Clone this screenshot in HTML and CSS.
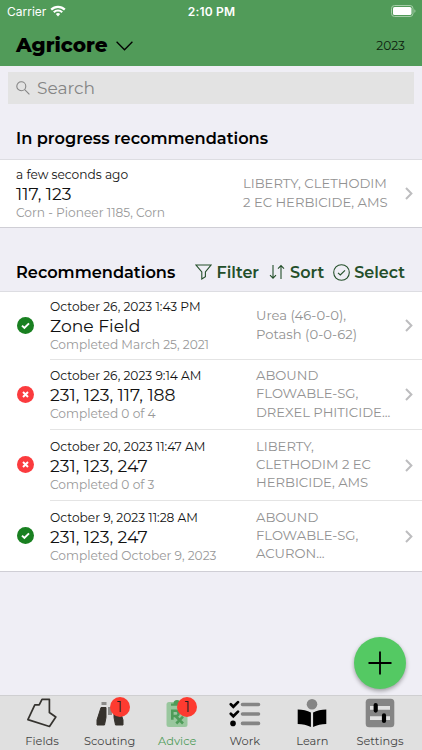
FILE: index.html
```html
<!DOCTYPE html>
<html lang="en">
<head>
    <meta charset="UTF-8">
    <meta name="viewport" content="width=device-width, initial-scale=1.0">
    <title>Agricore</title>
    <link rel="stylesheet" href="styles.css">
</head>
<body>
    <div class="app">
        <header class="header">
            <div class="status-bar">
                <div class="carrier">
                    <span>Carrier</span>
                    <svg width="16" height="12" viewBox="0 0 16 12" fill="none" stroke="#fff" stroke-width="2.2">
                        <path d="M1.2 4.6a9.6 9.6 0 0 1 13.6 0M3.8 7.2a6 6 0 0 1 8.4 0"/>
                        <path d="M8 11.4L5.8 9.1a3.1 3.1 0 0 1 4.4 0z" fill="#fff" stroke="none"/>
                    </svg>
                </div>
                <span class="time">2:10 PM</span>
                <svg class="battery" width="25" height="12" viewBox="0 0 25 12">
                    <rect x=".5" y=".5" width="21.5" height="11" rx="3" fill="none" stroke="#a5cda8"/>
                    <rect x="2" y="2" width="18.5" height="8" rx="1.6" fill="#fff"/>
                    <path d="M23.4 4.2c1.4.5 1.4 3.1 0 3.6z" fill="#a5cda8"/>
                </svg>
            </div>
            <div class="title-bar">
                <h1>Agricore</h1>
                <svg class="chevron-down" width="17" height="10" viewBox="0 0 17 10" fill="none" stroke="#000" stroke-width="1.3"><path d="M.6.8l7.9 8 7.9-8"/></svg>
                <span class="year">2023</span>
            </div>
        </header>

        <main class="content">
            <div class="search">
                <svg width="14" height="14" viewBox="0 0 14 14" fill="none" stroke="#858585" stroke-width="1.1"><circle cx="5.3" cy="5.3" r="4.5"/><path d="M8.7 8.7l4.7 4.6"/></svg>
                <span>Search</span>
            </div>

            <h2 class="section-title">In progress recommendations</h2>
            <div class="list">
                <div class="row row-progress">
                    <div class="info">
                        <div class="date">a few seconds ago</div>
                        <div class="fields">117, 123</div>
                        <div class="note">Corn - Pioneer 1185, Corn</div>
                    </div>
                    <div class="products">LIBERTY, CLETHODIM<br>2 EC HERBICIDE, AMS</div>
                    <svg class="arrow" width="8" height="13" viewBox="0 0 8 13"><path d="M1 1l5.4 5.5L1 12"/></svg>
                </div>
            </div>

            <div class="section-bar">
                <h2>Recommendations</h2>
                <div class="action filter">
                    <svg width="17" height="16" viewBox="0 0 17 16"><path d="M1 1h15l-5.6 7v4.6L6.8 15V8z"/></svg>
                    <span>Filter</span>
                </div>
                <div class="action sort">
                    <svg width="16" height="16" viewBox="0 0 16 16"><path d="M4 1v13M1 11.2l3 3 3-3M12 15V1.6M9 4.6l3-3 3 3"/></svg>
                    <span>Sort</span>
                </div>
                <div class="action select">
                    <svg width="17" height="17" viewBox="0 0 17 17"><circle cx="8.5" cy="8.5" r="7.8"/><path d="M5 8.8l2.3 2.2L12 6.3"/></svg>
                    <span>Select</span>
                </div>
            </div>
            <div class="list">
                <div class="row row-first">
                    <svg class="state" width="17" height="17" viewBox="0 0 17 17"><circle cx="8.5" cy="8.5" r="8.5" fill="#198021"/><path d="M5 8.6l2.4 2.3L12 6.4"/></svg>
                    <div class="details">
                        <div class="info">
                            <div class="date">October 26, 2023 1:43 PM</div>
                            <div class="fields">Zone Field</div>
                            <div class="note">Completed March 25, 2021</div>
                        </div>
                        <div class="products">Urea (46-0-0),<br>Potash (0-0-62)</div>
                        <svg class="arrow" width="8" height="13" viewBox="0 0 8 13"><path d="M1 1l5.4 5.5L1 12"/></svg>
                    </div>
                </div>
                <div class="row row-short">
                    <svg class="state" width="17" height="17" viewBox="0 0 17 17"><circle cx="8.5" cy="8.5" r="8.5" fill="#fb3b3e"/><path d="M6 6l5 5M11 6l-5 5"/></svg>
                    <div class="details">
                        <div class="info">
                            <div class="date">October 26, 2023 9:14 AM</div>
                            <div class="fields">231, 123, 117, 188</div>
                            <div class="note">Completed 0 of 4</div>
                        </div>
                        <div class="products">ABOUND<br>FLOWABLE-SG,<br>DREXEL PHITICIDE...</div>
                        <svg class="arrow" width="8" height="13" viewBox="0 0 8 13"><path d="M1 1l5.4 5.5L1 12"/></svg>
                    </div>
                </div>
                <div class="row">
                    <svg class="state" width="17" height="17" viewBox="0 0 17 17"><circle cx="8.5" cy="8.5" r="8.5" fill="#fb3b3e"/><path d="M6 6l5 5M11 6l-5 5"/></svg>
                    <div class="details">
                        <div class="info">
                            <div class="date">October 20, 2023 11:47 AM</div>
                            <div class="fields">231, 123, 247</div>
                            <div class="note">Completed 0 of 3</div>
                        </div>
                        <div class="products">LIBERTY,<br>CLETHODIM 2 EC<br>HERBICIDE, AMS</div>
                        <svg class="arrow" width="8" height="13" viewBox="0 0 8 13"><path d="M1 1l5.4 5.5L1 12"/></svg>
                    </div>
                </div>
                <div class="row">
                    <svg class="state" width="17" height="17" viewBox="0 0 17 17"><circle cx="8.5" cy="8.5" r="8.5" fill="#198021"/><path d="M5 8.6l2.4 2.3L12 6.4"/></svg>
                    <div class="details">
                        <div class="info">
                            <div class="date">October 9, 2023 11:28 AM</div>
                            <div class="fields">231, 123, 247</div>
                            <div class="note">Completed October 9, 2023</div>
                        </div>
                        <div class="products">ABOUND<br>FLOWABLE-SG,<br>ACURON...</div>
                        <svg class="arrow" width="8" height="13" viewBox="0 0 8 13"><path d="M1 1l5.4 5.5L1 12"/></svg>
                    </div>
                </div>
            </div>
        </main>

        <button class="add-button" aria-label="Add">
            <svg width="24" height="24" viewBox="0 0 24 24" stroke="#000" stroke-width="1.8"><path d="M12 .5v23M.5 12h23"/></svg>
        </button>

        <nav class="tabs">
            <div class="tab">
                <svg width="30" height="30" viewBox="0 0 30 30" fill="none" stroke="#35332f" stroke-width="1.7" stroke-linejoin="round"><path d="M15 1.3h7.4v13.2l6.4 4.5-6.3 9.5L.9 21.6 7.8 6.8h4.4z"/></svg>
                <span>Fields</span>
            </div>
            <div class="tab">
                <div class="icon">
                    <svg width="30" height="30" viewBox="0 0 30 30">
                        <path d="M6.500 4h5v3h-5zM18.500 4h5v3h-5zM13 9h4v8h-4z" fill="#8c8b89"/>
                        <path d="M6 9.500h5v10L9.500 27H2v-5zM19 9.500h5L28 22v5h-7.500L19 19.500z" fill="#36322d" stroke="#36322d" stroke-linejoin="round"/>
                    </svg>
                    <span class="badge">1</span>
                </div>
                <span>Scouting</span>
            </div>
            <div class="tab active">
                <div class="icon">
                    <svg width="30" height="30" viewBox="0 0 30 30">
                        <rect x="4.500" y="4" width="21" height="25" rx="2.500" fill="#99c79e"/>
                        <path d="M9 7.700V5.500h2.500a3.500 3.500 0 0 1 7 0H21v2.200z" fill="#4f9c59"/>
                        <path d="M10.300 21.800v-9H14a2.600 2.600 0 0 1 0 5.200h-3.700M13.500 18l7.500 7.500M21 18.700l-6.700 6.800" fill="none" stroke="#4f9c59" stroke-width="2.600"/>
                    </svg>
                    <span class="badge">1</span>
                </div>
                <span>Advice</span>
            </div>
            <div class="tab">
                <svg width="32" height="30" viewBox="0 0 32 30" fill="none">
                    <path d="M13.500 6.500h16M13.500 16h16M13.500 25.400h16" stroke="#858585" stroke-width="3.600" stroke-linecap="round"/>
                    <path d="M1.800 6.300l2.500 2.500 4.700-4.700M1.800 15.800l2.500 2.500 4.700-4.700" stroke="#000" stroke-width="2.700" stroke-linecap="round"/>
                    <circle cx="4" cy="25.400" r="2.800" fill="#000"/>
                </svg>
                <span>Work</span>
            </div>
            <div class="tab">
                <svg width="30" height="30" viewBox="0 0 30 30">
                    <circle cx="15" cy="6.200" r="5.300" fill="#858585"/>
                    <path d="M.7 11.500c5 0 9.500 1 13.200 3V29C10 27 5.500 26.200.7 26zM29.300 11.500c-5 0-9.500 1-13.200 3V29c3.900-2 8.400-2.800 13.200-3z"/>
                </svg>
                <span>Learn</span>
            </div>
            <div class="tab">
                <svg width="30" height="30" viewBox="0 0 30 30">
                    <rect x=".7" y=".7" width="28.600" height="28.600" rx="3.500" fill="#858585"/>
                    <path d="M5 9.800h20M5 20.200h20" stroke="#e0e0e0" stroke-width="3.800"/>
                    <path d="M10.700 7v5.600M19 17.400V23" stroke="#000" stroke-width="4.200" stroke-linecap="round"/>
                </svg>
                <span>Settings</span>
            </div>
        </nav>
    </div>
</body>
</html>
```
FILE: styles.css
```css
body {
    margin: 0;
    font-family: Montserrat, Inter, sans-serif;
    background-color: #efeef5;
    color: #111;
}

h1, h2 {
    margin: 0;
}

svg {
    display: block;
    flex: none;
}

.app {
    position: relative;
    display: flex;
    flex-direction: column;
    height: 750px;
    overflow: hidden;
    white-space: nowrap;
}

.header {
    height: 66px;
    background-color: #519b59;
}

.status-bar {
    display: grid;
    grid-template-columns: 1fr auto 1fr;
    align-items: center;
    height: 22px;
    padding: 0 6px 0 7px;
    color: #fff;
    font-family: Inter, sans-serif;
    font-size: 12px;
}

.carrier {
    display: flex;
    align-items: center;
    gap: 4px;
}

.time {
    font-weight: 600;
    letter-spacing: 0.2px;
}

.battery {
    justify-self: end;
}

.title-bar {
    display: flex;
    align-items: center;
    height: 46px;
    padding: 0 17px 0 16px;
}

.title-bar h1 {
    font-size: 20px;
    font-weight: 800;
    color: #000;
}

.chevron-down {
    margin: 2px 0 0 8px;
}

.year {
    margin-left: auto;
    font-size: 12.2px;
    color: #0c200e;
}

.content {
    flex: 1;
}

.search {
    display: flex;
    align-items: center;
    gap: 7px;
    height: 32px;
    margin: 6px 8px 0;
    padding-left: 8px;
    background-color: #e3e3e3;
    color: #858585;
    font-size: 17px;
}

.section-title,
.section-bar h2 {
    font-size: 16.2px;
    font-weight: 600;
    color: #000;
}

.section-title {
    margin-top: 23px;
    padding-left: 16px;
    height: 32px;
    line-height: 23px;
}

.list {
    background-color: #fff;
    border-top: 1px solid #dddde2;
    border-bottom: 1px solid #cfced5;
}

.row {
    display: flex;
    align-items: center;
    height: 71px;
    padding-left: 17px;
}

.row-progress {
    height: 67px;
    padding: 0 9px 0 16px;
}

.row-first {
    height: 67px;
}

.row-short {
    height: 70px;
}

.details {
    flex: 1;
    display: flex;
    align-items: center;
    height: 100%;
    box-sizing: border-box;
    margin-left: 16px;
    padding-right: 9px;
}

.row + .row .details {
    border-top: 1px solid #e4e4e4;
}

.info {
    flex: 1;
}

.date {
    font-size: 12.2px;
    line-height: 18px;
}

.fields {
    font-size: 17.2px;
    line-height: 20px;
}

.note {
    font-size: 12.2px;
    line-height: 17px;
    color: #999;
}

.products {
    width: 149px;
    padding-bottom: 2px;
    font-size: 13.15px;
    line-height: 18.3px;
    color: #929292;
}

.row-progress .products {
    width: 162px;
}

.arrow {
    fill: none;
    stroke: #bdbdbf;
    stroke-width: 2;
}

.state path {
    fill: none;
    stroke: #fff;
    stroke-width: 2;
}

.section-bar {
    display: flex;
    align-items: center;
    height: 38px;
    padding: 25px 17px 0 16px;
}

.action {
    display: flex;
    align-items: center;
    gap: 4px;
    color: #244f2a;
    font-size: 16px;
    font-weight: 600;
}

.action svg {
    fill: none;
    stroke: #244f2a;
    stroke-width: 1.1;
}

.filter {
    margin-left: auto;
}

.sort {
    gap: 5px;
    margin-left: 10px;
}

.select {
    margin-left: 9px;
}

.add-button {
    position: absolute;
    right: 16px;
    bottom: 61px;
    display: flex;
    align-items: center;
    justify-content: center;
    width: 52px;
    height: 52px;
    padding: 0;
    border: none;
    border-radius: 50%;
    background-color: #54c963;
    box-shadow: 0 2px 4px rgba(0, 0, 0, 0.35);
}

.tabs {
    display: grid;
    grid-template-columns: repeat(6, 67.6px);
    justify-content: center;
    height: 55px;
    box-sizing: border-box;
    border-top: 1px solid #cfcfd1;
    background-color: #e0e0e0;
}

.tab {
    display: flex;
    flex-direction: column;
    align-items: center;
    padding-top: 2px;
    font-size: 11.4px;
    line-height: 27px;
    color: #454545;
}

.tab.active {
    color: #4f9c59;
}

.icon {
    position: relative;
}

.badge {
    position: absolute;
    top: -1px;
    left: 15px;
    width: 20px;
    height: 20px;
    border-radius: 50%;
    background-color: #fd3b30;
    color: #222;
    font-size: 14px;
    line-height: 20px;
    text-align: center;
}
```
